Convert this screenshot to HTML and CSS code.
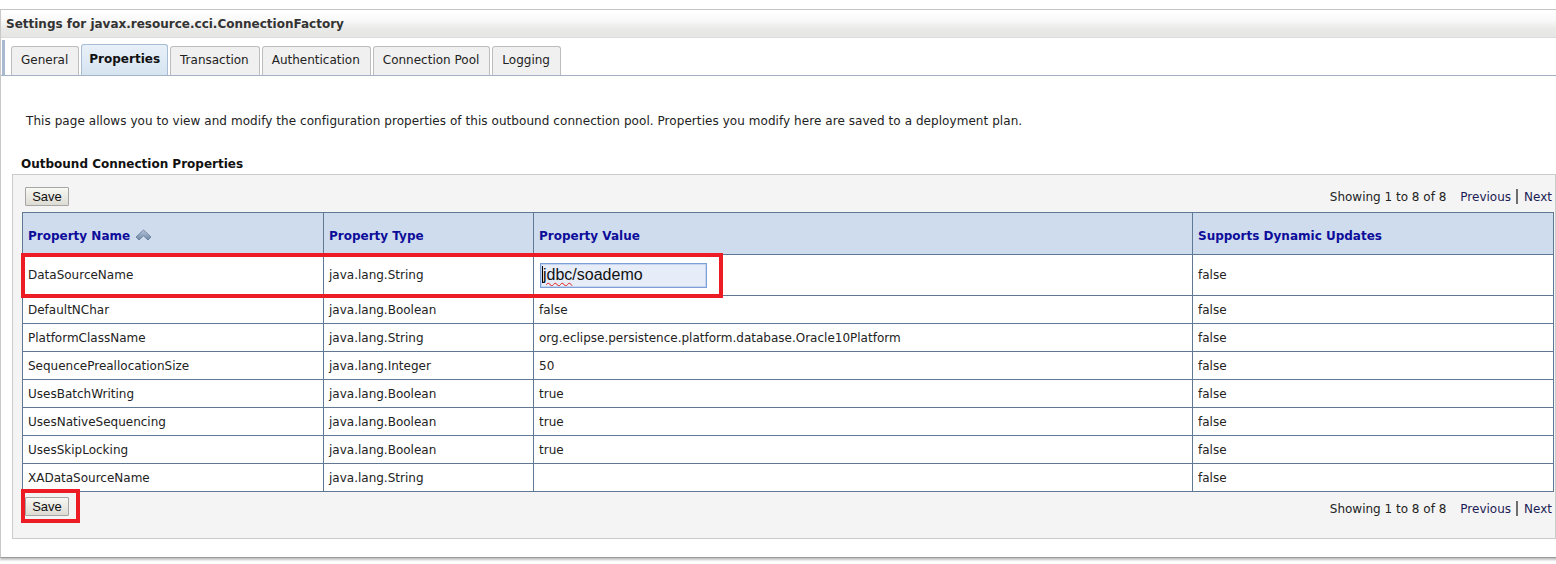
FILE: index.html
```html
<!DOCTYPE html>
<html>
<head>
<meta charset="utf-8">
<link rel="stylesheet" href="styles.css">
</head>
<body>
<div class="panel">
  <div class="titlebar">Settings for javax.resource.cci.ConnectionFactory</div>
  <div class="tabstrip">
    <div class="tab">General</div>
    <div class="tab active">Properties</div>
    <div class="tab">Transaction</div>
    <div class="tab">Authentication</div>
    <div class="tab">Connection Pool</div>
    <div class="tab">Logging</div>
  </div>
  <p class="intro">This page allows you to view and modify the configuration properties of this outbound connection pool. Properties you modify here are saved to a deployment plan.</p>
  <h3 class="section">Outbound Connection Properties</h3>
  <div class="box">
    <div class="bar top">
      <span class="btnwrap"><button class="btn">Save</button></span>
      <span class="pager">Showing 1 to 8 of 8<a class="link prev">Previous</a><span class="sep"></span><a class="link">Next</a></span>
    </div>
    <div class="tablewrap">
      <table class="grid">
        <colgroup>
          <col class="c1"><col class="c2"><col class="c3"><col class="c4">
        </colgroup>
        <thead>
          <tr>
            <th>Property Name <svg class="sort" width="17" height="12" viewBox="0 0 17 12"><defs><linearGradient id="sg" x1="0" y1="0" x2="0" y2="1"><stop offset="0" stop-color="#b8c8dc"/><stop offset="1" stop-color="#6f87a6"/></linearGradient></defs><path d="M8.5 1 L16 8 L13 11 L8.5 6.8 L4 11 L1 8 Z" fill="url(#sg)" stroke="#5d7593" stroke-width="0.8" stroke-linejoin="round"/></svg></th>
            <th>Property Type</th>
            <th>Property Value</th>
            <th>Supports Dynamic Updates</th>
          </tr>
        </thead>
        <tbody>
          <tr class="first">
            <td>DataSourceName</td>
            <td>java.lang.String</td>
            <td><div class="field"><span class="caret"></span><span class="spell">jdbc</span>/soademo</div></td>
            <td>false</td>
          </tr>
          <tr><td>DefaultNChar</td><td>java.lang.Boolean</td><td>false</td><td>false</td></tr>
          <tr><td>PlatformClassName</td><td>java.lang.String</td><td>org.eclipse.persistence.platform.database.Oracle10Platform</td><td>false</td></tr>
          <tr><td>SequencePreallocationSize</td><td>java.lang.Integer</td><td>50</td><td>false</td></tr>
          <tr><td>UsesBatchWriting</td><td>java.lang.Boolean</td><td>true</td><td>false</td></tr>
          <tr><td>UsesNativeSequencing</td><td>java.lang.Boolean</td><td>true</td><td>false</td></tr>
          <tr><td>UsesSkipLocking</td><td>java.lang.Boolean</td><td>true</td><td>false</td></tr>
          <tr><td>XADataSourceName</td><td>java.lang.String</td><td></td><td>false</td></tr>
        </tbody>
      </table>
      <div class="mark mark-row"></div>
    </div>
    <div class="bar bottom">
      <span class="btnwrap"><button class="btn">Save</button><span class="mark mark-btn"></span></span>
      <span class="pager">Showing 1 to 8 of 8<a class="link prev">Previous</a><span class="sep"></span><a class="link">Next</a></span>
    </div>
  </div>
</div>
</body>
</html>
```
FILE: styles.css
```css
html, body {
  margin: 0;
  padding: 0;
  background: #fff;
  overflow: hidden;
}
body {
  font-family: "DejaVu Sans", Tahoma, sans-serif;
  font-size: 11px;
  color: #222;
  width: 1556px;
  height: 564px;
}
.panel {
  margin-top: 9px;
  width: 1570px;
  height: 549px;
  border-top: 1px solid #c4c4c4;
  border-left: 1px solid #c8c8c8;
  border-bottom: 1px solid #9a9a9a;
  box-shadow: 0 2px 2px rgba(0,0,0,0.25);
  box-sizing: border-box;
  position: relative;
}
.titlebar {
  height: 28px;
  box-sizing: border-box;
  border-top: 1px solid #fff;
  border-bottom: 1px solid #dcdcdc;
  background: linear-gradient(#ffffff 0%, #f9f9f9 35%, #e9eae7 70%, #e6e7e4 100%);
  font-weight: bold;
  font-size: 12px;
  color: #333;
  padding-left: 5px;
  line-height: 26px;
}
.tabstrip {
  display: flex;
  align-items: flex-end;
  gap: 2px;
  height: 38px;
  box-sizing: border-box;
  padding-left: 10px;
  border-bottom: 1px solid #a3b2c4;
  position: relative;
}
.tabstrip::before {
  content: "";
  position: absolute;
  left: 1px;
  top: 2px;
  bottom: 0;
  width: 3px;
  background: #a9bad0;
}
.tab {
  height: 29px;
  box-sizing: border-box;
  border: 1px solid #bdbdbd;
  border-bottom: none;
  border-radius: 3px 3px 0 0;
  background: #f0f0f0;
  padding: 0 10px 0 9px;
  line-height: 26px;
  font-size: 12px;
  color: #222;
}
.tab.active {
  background: linear-gradient(#e8f0f8, #d6e4f1);
  border-color: #a7bdd4;
  font-weight: bold;
  color: #111;
  height: 31px;
  line-height: 28px;
  padding: 0 7px;
}
.intro {
  margin: 38px 0 0 25px;
  font-size: 12px;
  line-height: 15px;
  letter-spacing: 0.06px;
  color: #222;
}
.section {
  margin: 28px 0 0 20px;
  font-size: 12px;
  line-height: 15px;
  font-weight: bold;
  color: #111;
}
.box {
  margin: 2px 0 0 11px;
  width: 1544px;
  box-sizing: border-box;
  background: #f4f4f4;
  border: 1px solid #cbcbcb;
  padding: 0 2px 10px 9px;
}
.bar {
  display: flex;
  justify-content: space-between;
  align-items: center;
}
.bar.top {
  height: 37px;
}
.bar.top .pager {
  margin-top: 6px;
}
.bar.bottom {
  height: 36px;
  align-items: flex-start;
  padding-top: 5px;
  box-sizing: border-box;
}
.bar.bottom .pager {
  margin-top: 4px;
}
.btnwrap {
  position: relative;
  display: inline-block;
  margin-left: 3px;
}
.btn {
  font-family: "Liberation Sans", Arial, sans-serif;
  font-size: 13px;
  color: #111;
  height: 19px;
  width: 44px;
  padding: 0;
  border: 1px solid #a6a6a6;
  border-radius: 1px;
  background: linear-gradient(#f8f8f4, #dddcd3);
  display: block;
  line-height: 17px;
}
.bar.top .btnwrap {
  margin-top: 6px;
}
.pager {
  font-size: 12px;
  color: #222;
  display: flex;
  align-items: center;
  padding-right: 1px;
}
.link {
  color: #1b1b55;
}
.prev {
  margin-left: 14px;
}
.sep {
  display: inline-block;
  width: 2px;
  height: 15px;
  background: #6e6e6e;
  margin: 0 6px 0 5px;
}
.tablewrap {
  position: relative;
}
.grid {
  border-collapse: collapse;
  table-layout: fixed;
  width: 1531px;
  border: 1px solid #5f7894;
}
.c1 { width: 301px; }
.c2 { width: 210px; }
.c3 { width: 659px; }
.c4 { width: 361px; }
.grid th {
  height: 42px;
  background: #cfdcee;
  border: 1px solid #5f7894;
  color: #0d0d9a;
  font-size: 12px;
  font-weight: bold;
  text-align: left;
  padding: 4px 5px 0 5px;
  box-sizing: border-box;
}
.sort {
  vertical-align: -1px;
  margin-left: 1px;
}
.grid td {
  height: 28px;
  box-sizing: border-box;
  background: #fff;
  border: 1px solid #5f7894;
  padding: 0 5px;
  font-size: 12px;
  color: #222;
  white-space: nowrap;
}
.grid tr.first td {
  height: 41px;
}
.field {
  width: 167px;
  height: 25px;
  box-sizing: border-box;
  border: 1px solid #7b9fd6;
  box-shadow: inset 0 0 0 1px #c5d5ef;
  background: #e6edf9;
  font-family: "Liberation Sans", Arial, sans-serif;
  font-size: 16px;
  line-height: 22px;
  color: #111;
  padding-left: 1px;
  margin-left: 1px;
}
.caret {
  display: inline-block;
  width: 1px;
  height: 17px;
  background: #000;
  vertical-align: -3px;
}
.spell {
  text-decoration: underline wavy #e02020;
  text-decoration-thickness: 1px;
  text-underline-offset: 2px;
}
.mark {
  position: absolute;
  border: 4px solid #ed1c24;
  box-sizing: border-box;
  pointer-events: none;
}
.mark-row {
  left: -1px;
  top: 41px;
  width: 702px;
  height: 45px;
}
.mark-btn {
  left: -4px;
  top: -8px;
  width: 59px;
  height: 34px;
}
```
